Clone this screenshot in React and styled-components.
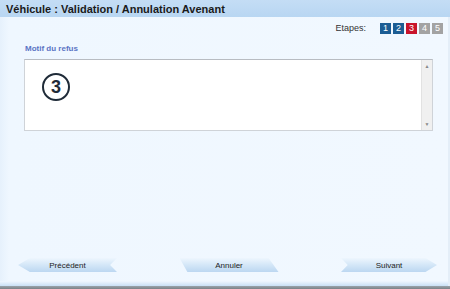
import React from "react";
import styled, { createGlobalStyle } from "styled-components";

const GlobalStyle = createGlobalStyle`
  html, body {
    margin: 0;
    padding: 0;
    background: #eef6fe;
    font-family: "Liberation Sans", Arial, sans-serif;
  }
`;

const Frame = styled.div`
  width: 450px;
  height: 289px;
  display: flex;
  flex-direction: column;
  background: #f0f7ff;
  overflow: hidden;
`;

const Header = styled.div`
  height: 17px;
  flex: none;
  display: flex;
  align-items: center;
  padding: 0 6px;
  background: linear-gradient(#c4ddf5, #b8d6f2);
  font-size: 11px;
  font-weight: bold;
  color: #1a1a1a;
`;

const Body = styled.div`
  flex: 1;
  display: flex;
  flex-direction: column;
  padding: 5px 5px 0 24px;
  background: linear-gradient(90deg, #e6f1fc 0, #eff7ff 9px, #f1f8ff 100%);
  border-right: 2px solid #e4eef8;
`;

const StepsRow = styled.div`
  display: flex;
  justify-content: flex-end;
  align-items: center;
  gap: 2px;
  height: 12px;
`;

const StepsLabel = styled.span`
  font-size: 9px;
  color: #333;
  margin-right: 12px;
`;

const Step = styled.span`
  width: 11px;
  height: 11px;
  display: flex;
  align-items: center;
  justify-content: center;
  font-size: 9px;
  color: #fff;
  background: ${(p) => p.color};
`;

const Label = styled.div`
  margin-top: 10px;
  font-size: 8px;
  font-weight: bold;
  color: #5a74c4;
  padding-left: 1px;
`;

const TextBox = styled.div`
  margin-top: 6px;
  width: 409px;
  height: 72px;
  box-sizing: border-box;
  display: flex;
  background: #fff;
  border: 1px solid #cfd3d8;
  border-top-color: #b8bcc2;
`;

const TextArea = styled.div`
  flex: 1;
  padding: 13px 0 0 17px;
`;

const Circle = styled.div`
  width: 24px;
  height: 24px;
  border: 2px solid #1f2b38;
  border-radius: 50%;
  display: flex;
  align-items: center;
  justify-content: center;
  font-size: 18px;
  font-weight: bold;
  color: #1f2b38;
  line-height: 1;
`;

const Scrollbar = styled.div`
  width: 10px;
  display: flex;
  flex-direction: column;
  justify-content: space-between;
  align-items: center;
  background: #f0f0f0;
  border-left: 1px solid #e2e2e2;
  font-size: 5px;
  color: #888;
  padding: 3px 0;
`;

const ButtonRow = styled.div`
  margin-top: auto;
  margin-left: -6px;
  margin-bottom: 9px;
  display: flex;
  justify-content: space-between;
  padding-right: 6px;
`;

const shapes = {
  prev: "polygon(0 50%, 12% 0, 100% 0, 93% 50%, 100% 100%, 12% 100%)",
  mid: "polygon(0 0, 90% 0, 100% 100%, 8% 100%)",
  next: "polygon(0 0, 88% 0, 100% 50%, 88% 100%, 0 100%, 7% 50%)",
};

const NavButton = styled.div`
  width: ${(p) => (p.kind === "next" ? 96 : 99)}px;
  height: 14px;
  display: flex;
  align-items: center;
  justify-content: center;
  font-size: 8px;
  color: #222;
  clip-path: ${(p) => shapes[p.kind]};
  background: linear-gradient(#eef6fe 0%, #d6e8f8 45%, #bcd7f1 100%);
`;

const FooterBar = styled.div`
  height: 5px;
  flex: none;
  background: linear-gradient(#f0f7ff, #c9e0f5);
  border-right: 2px solid #e4eef8;
`;

const Edge = styled.div`
  height: 3px;
  flex: none;
  background: linear-gradient(#9aa3aa, #7b8288);
`;

const steps = [
  { n: 1, color: "#1c5d94" },
  { n: 2, color: "#1c5d94" },
  { n: 3, color: "#c8142c" },
  { n: 4, color: "#a3a3a3" },
  { n: 5, color: "#a3a3a3" },
];

export default function App() {
  return (
    <>
      <GlobalStyle />
      <Frame>
        <Header>Véhicule : Validation / Annulation Avenant</Header>
        <Body>
          <StepsRow>
            <StepsLabel>Etapes:</StepsLabel>
            {steps.map((s) => (
              <Step key={s.n} color={s.color}>
                {s.n}
              </Step>
            ))}
          </StepsRow>
          <Label>Motif du refus</Label>
          <TextBox>
            <TextArea>
              <Circle>3</Circle>
            </TextArea>
            <Scrollbar>
              <span>▲</span>
              <span>▼</span>
            </Scrollbar>
          </TextBox>
          <ButtonRow>
            <NavButton kind="prev">Précédent</NavButton>
            <NavButton kind="mid">Annuler</NavButton>
            <NavButton kind="next">Suivant</NavButton>
          </ButtonRow>
        </Body>
        <FooterBar />
        <Edge />
      </Frame>
    </>
  );
}
